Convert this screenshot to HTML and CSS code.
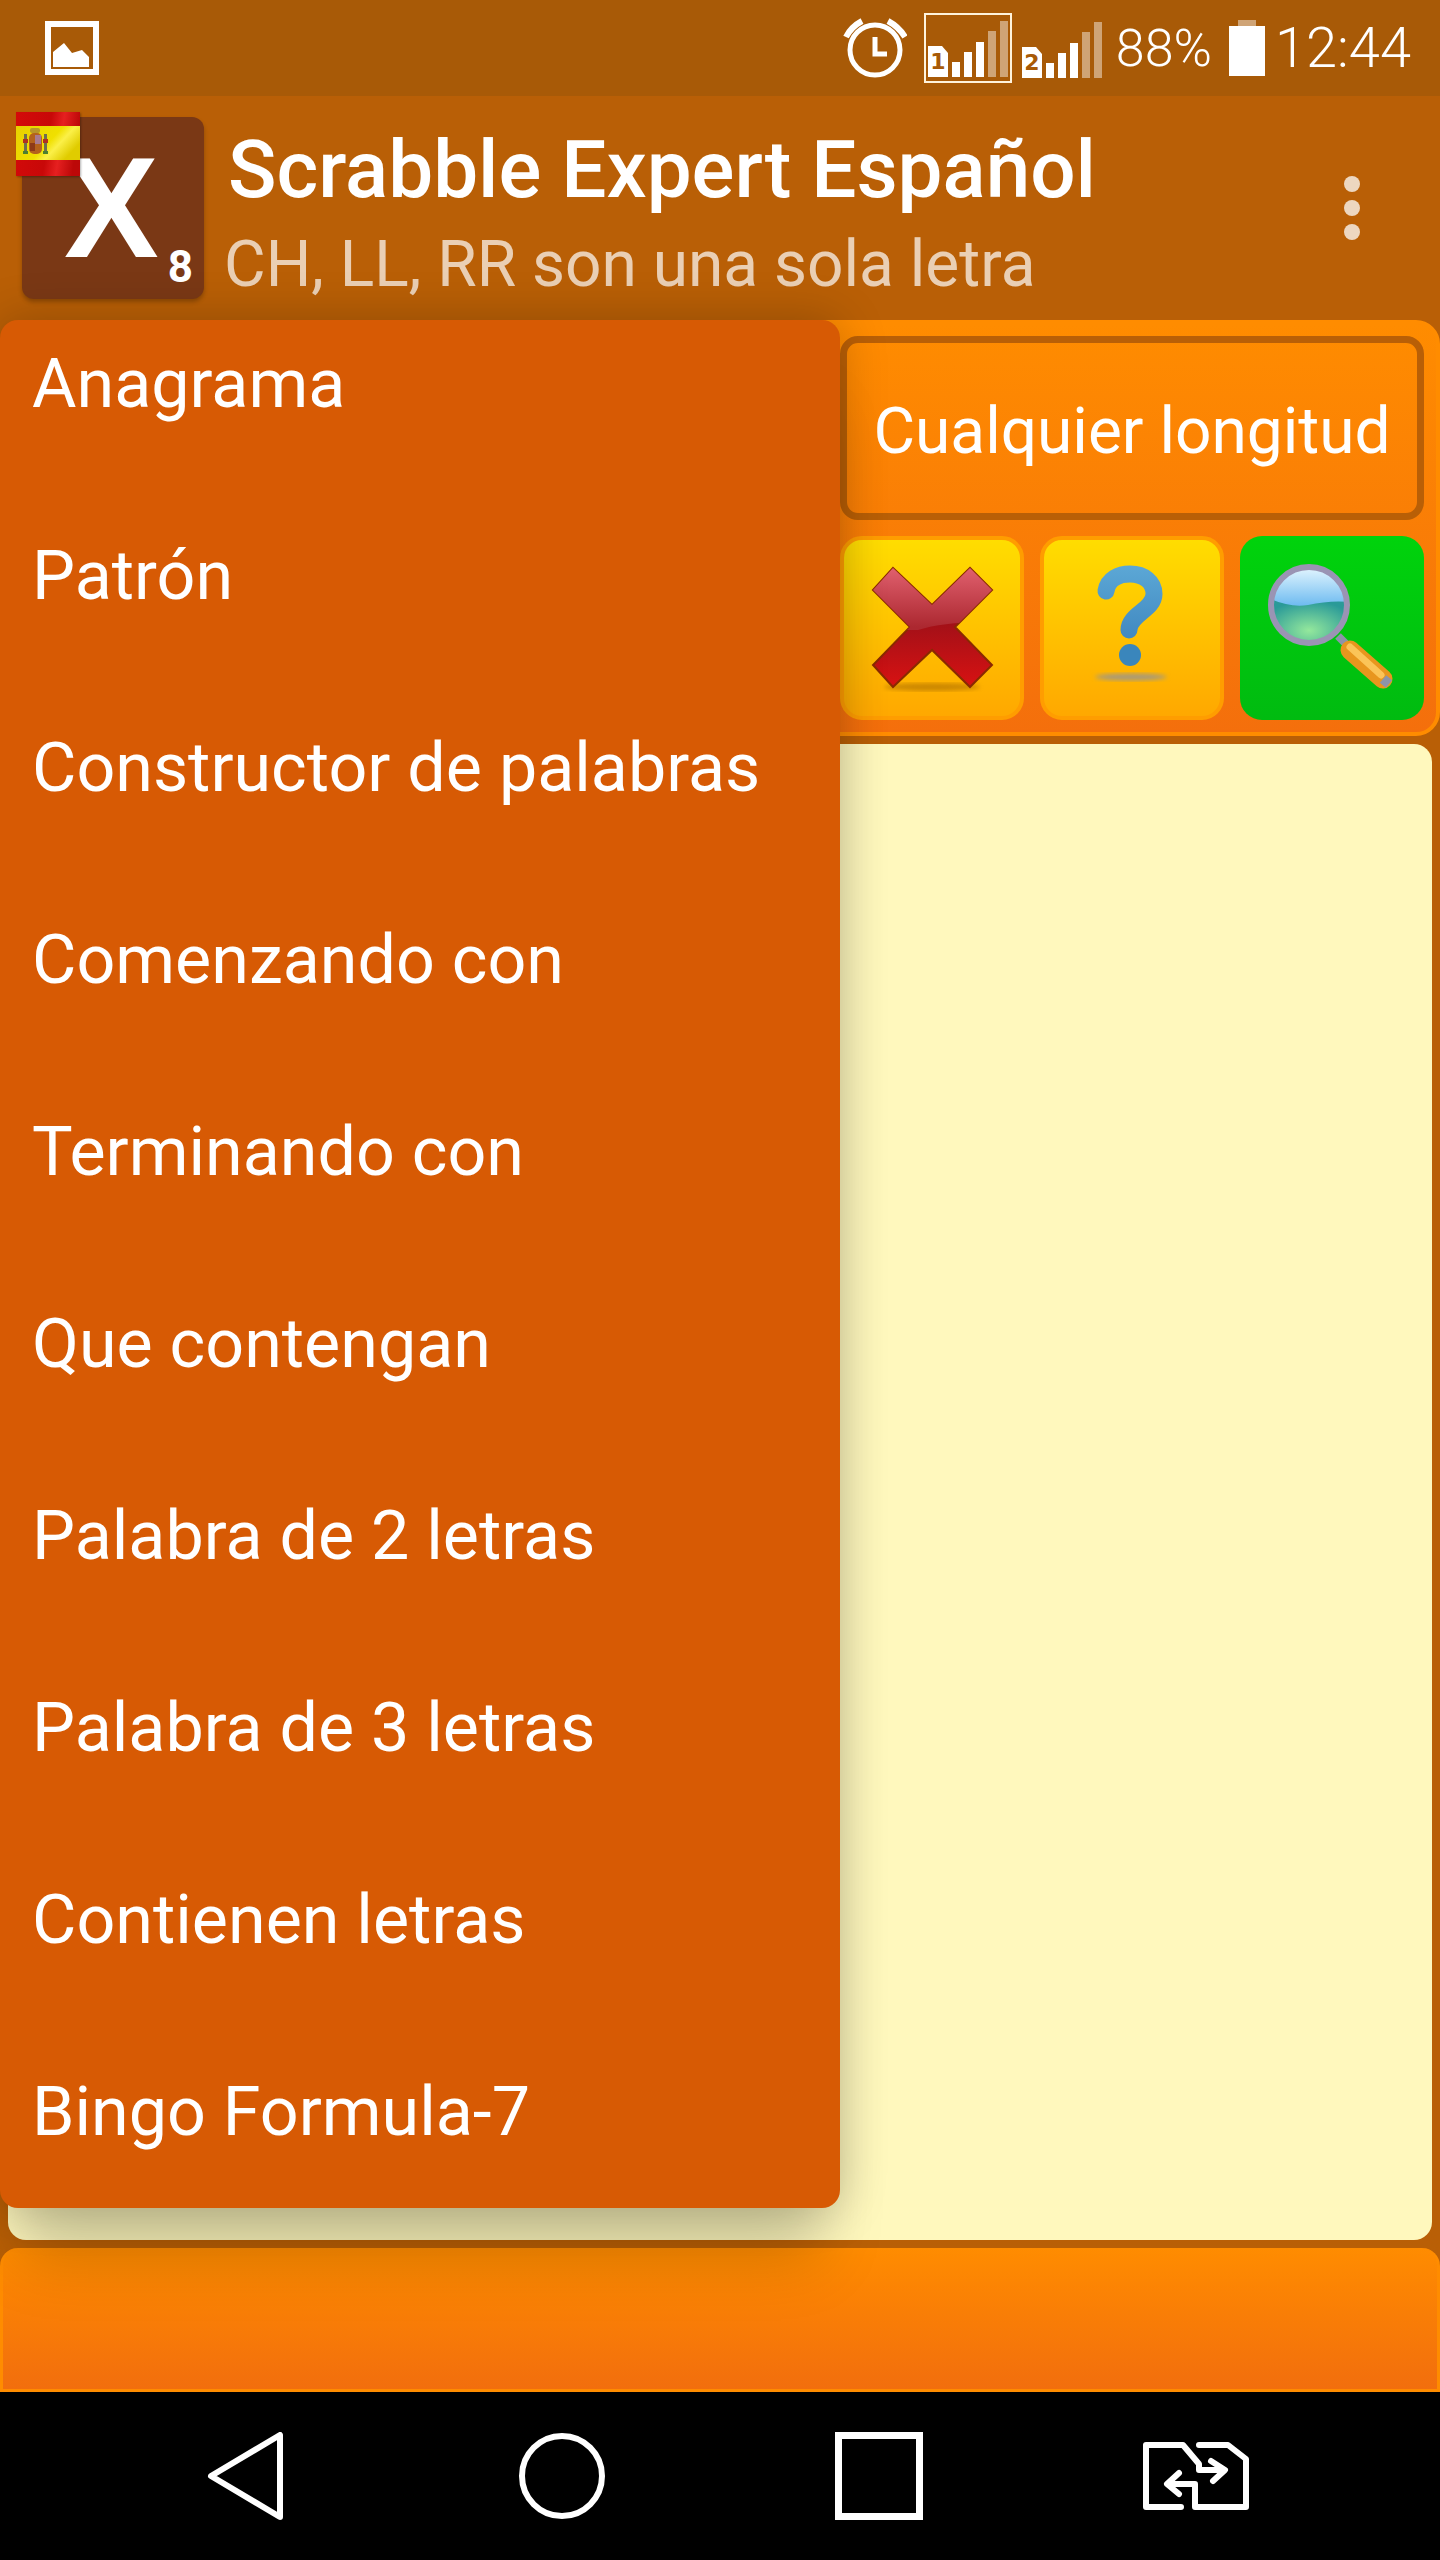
FILE: index.html
```html
<!DOCTYPE html>
<html lang="es">
<head>
    <meta charset="UTF-8">
    <meta name="viewport" content="width=device-width, initial-scale=1.0">
    <title>Scrabble Expert Español</title>
    <link rel="stylesheet" href="styles.css">
</head>
<body>
    <div class="screen">
        <!-- status bar -->
        <div class="status-bar">
            <svg class="gallery-icon" width="54" height="54" viewBox="0 0 54 54">
                <rect x="3" y="3" width="48" height="48" fill="none" stroke="#fff" stroke-width="6"/>
                <polygon points="8,46 8,31 19,22 27,32 37,29 44,36 44,46" fill="#fff"/>
            </svg>
            <div class="status-right">
                <svg class="alarm-icon" width="64" height="62" viewBox="0 0 64 62" fill="none" stroke="#fff">
                    <circle cx="32" cy="33" r="25" stroke-width="5"/>
                    <path d="M32 20V37H44" stroke-width="5"/>
                    <path d="M3 20Q8 10 19 4M45 4Q56 10 62 20" stroke-width="6"/>
                </svg>
                <div class="sim-box">
                    <svg width="80" height="56" viewBox="0 0 80 56">
                        <path d="M0 25H14L20 32V56H0Z" fill="#fff"/>
                        <text x="10" y="48" class="sim-num">1</text>
                        <rect x="24" y="41" width="8" height="15" fill="#fff"/>
                        <rect x="36" y="31" width="8" height="25" fill="#fff"/>
                        <rect x="48" y="21" width="8" height="35" fill="#fff"/>
                        <rect x="60" y="10" width="8" height="46" fill="#fff" opacity="0.45"/>
                        <rect x="72" y="0" width="8" height="56" fill="#fff" opacity="0.45"/>
                    </svg>
                </div>
                <svg class="sim-two" width="80" height="56" viewBox="0 0 80 56">
                    <path d="M0 25H14L20 32V56H0Z" fill="#fff"/>
                    <text x="10" y="48" class="sim-num">2</text>
                    <rect x="24" y="41" width="8" height="15" fill="#fff"/>
                    <rect x="36" y="31" width="8" height="25" fill="#fff"/>
                    <rect x="48" y="21" width="8" height="35" fill="#fff"/>
                    <rect x="60" y="10" width="8" height="46" fill="#fff" opacity="0.45"/>
                    <rect x="72" y="0" width="8" height="56" fill="#fff" opacity="0.45"/>
                </svg>
                <span class="battery-text">88%</span>
                <svg class="battery-icon" width="36" height="56" viewBox="0 0 36 56">
                    <rect x="9" y="0" width="18" height="6" fill="#fff" opacity="0.45"/>
                    <rect x="0" y="6" width="36" height="50" fill="#fff"/>
                </svg>
                <span class="clock">12:44</span>
            </div>
        </div>

        <!-- action bar -->
        <div class="app-bar">
            <div class="tile">
                <span class="tile-letter">X</span>
                <span class="tile-score">8</span>
            </div>
            <svg class="flag" width="64" height="64" viewBox="0 0 64 64">
                <defs>
                    <linearGradient id="flagYellow" x1="0" y1="0" x2="1" y2="0.5">
                        <stop offset="0" stop-color="#e8d000"/>
                        <stop offset="0.6" stop-color="#f0e000"/>
                        <stop offset="0.75" stop-color="#fbf048"/>
                        <stop offset="1" stop-color="#e0cc00"/>
                    </linearGradient>
                    <linearGradient id="flagRed" x1="0" y1="0" x2="1" y2="0.15">
                        <stop offset="0" stop-color="#d40a0a"/>
                        <stop offset="0.55" stop-color="#c80808"/>
                        <stop offset="0.75" stop-color="#e62020"/>
                        <stop offset="1" stop-color="#bc0808"/>
                    </linearGradient>
                </defs>
                <rect width="64" height="64" fill="url(#flagRed)"/>
                <rect y="14" width="64" height="34" fill="url(#flagYellow)"/>
                <rect x="14" y="16" width="10" height="5" rx="2" fill="#b8962a"/>
                <rect x="13" y="21" width="13" height="21" rx="5" fill="#b4621c"/>
                <rect x="19" y="23" width="6" height="9" fill="#a87a90"/>
                <rect x="14" y="31" width="5" height="8" fill="#8e3a18"/>
                <rect x="8" y="22" width="3" height="17" fill="#6e6e50"/>
                <rect x="28" y="22" width="3" height="17" fill="#6e6e50"/>
                <rect x="7" y="27" width="5" height="4" fill="#b03020"/>
                <rect x="27" y="27" width="5" height="4" fill="#b03020"/>
                <rect x="7" y="39" width="5" height="3" fill="#4e8030"/>
                <rect x="27" y="39" width="5" height="3" fill="#4e8030"/>
            </svg>
            <div class="app-titles">
                <div class="app-title">Scrabble Expert Español</div>
                <div class="app-subtitle">CH, LL, RR son una sola letra</div>
            </div>
            <div class="overflow-dots">
                <span></span>
                <span></span>
                <span></span>
            </div>
        </div>

        <!-- search panel -->
        <div class="search-panel">
            <div class="length-select">Cualquier longitud</div>
            <div class="tool-row">
                <div class="tool-btn">
                    <svg width="176" height="176" viewBox="4 10 176 176">
                        <defs>
                            <linearGradient id="xDark" gradientUnits="userSpaceOnUse" x1="0" y1="90" x2="0" y2="157">
                                <stop offset="0" stop-color="#a01018"/>
                                <stop offset="1" stop-color="#d81212"/>
                            </linearGradient>
                            <linearGradient id="xLight" gradientUnits="userSpaceOnUse" x1="0" y1="38" x2="0" y2="97">
                                <stop offset="0" stop-color="#e0606e"/>
                                <stop offset="1" stop-color="#ac2830"/>
                            </linearGradient>
                            <clipPath id="xTop">
                                <path d="M20 20H165V93Q110 90 78 100H20Z"/>
                            </clipPath>
                            <filter id="soft"><feGaussianBlur stdDeviation="2"/></filter>
                        </defs>
                        <ellipse cx="92" cy="157" rx="48" ry="4" fill="#b87800" opacity="0.7" filter="url(#soft)"/>
                        <polygon points="53,38 92,75 130,38 152,60 115,97 152,135 130,157 92,120 53,157 33,135 70,97 33,60" fill="url(#xDark)" stroke="#8a2a00" stroke-width="2"/>
                        <polygon points="53,38 92,75 130,38 152,60 115,97 152,135 130,157 92,120 53,157 33,135 70,97 33,60" fill="url(#xLight)" clip-path="url(#xTop)"/>
                    </svg>
                </div>
                <div class="tool-btn">
                    <svg width="176" height="176" viewBox="4 10 176 176">
                        <defs>
                            <linearGradient id="qBlue" gradientUnits="userSpaceOnUse" x1="0" y1="35" x2="0" y2="110">
                                <stop offset="0" stop-color="#5ca8d6"/>
                                <stop offset="1" stop-color="#4088c0"/>
                            </linearGradient>
                        </defs>
                        <ellipse cx="91" cy="147" rx="36" ry="3.500" fill="#a89a78" filter="url(#soft)"/>
                        <path d="M66 61C68 49 79 44 90 44C104 44 114 52 114 64C114 80 89 84 89 100" fill="none" stroke="url(#qBlue)" stroke-width="17" stroke-linecap="round"/>
                        <circle cx="90" cy="125" r="11" fill="#3a86bc"/>
                    </svg>
                </div>
                <div class="tool-btn tool-btn-go">
                    <svg width="184" height="184" viewBox="0 6 184 184">
                        <defs>
                            <linearGradient id="lensTop" x1="0" y1="0" x2="0" y2="1">
                                <stop offset="0" stop-color="#e4f6ff"/>
                                <stop offset="0.5" stop-color="#70bcf0"/>
                            </linearGradient>
                            <radialGradient id="lensLow" cx="0.5" cy="0.65" r="0.6">
                                <stop offset="0" stop-color="#94e89c"/>
                                <stop offset="1" stop-color="#2a9a98"/>
                            </radialGradient>
                            <clipPath id="lensClip">
                                <circle cx="69" cy="75" r="38"/>
                            </clipPath>
                        </defs>
                        <path d="M98 106L108 116" stroke="#8c94a8" stroke-width="8"/>
                        <path d="M110 120L143 149" stroke="#e8961e" stroke-width="19" stroke-linecap="round"/>
                        <path d="M110 117L141 145" stroke="#fbc458" stroke-width="7" stroke-linecap="round"/>
                        <path d="M143 149L149 154" stroke="#8c94a8" stroke-width="10"/>
                        <circle cx="69" cy="75" r="38" fill="url(#lensTop)"/>
                        <path d="M28 68Q50 78 68 75Q90 70 110 72V118H28Z" fill="url(#lensLow)" clip-path="url(#lensClip)"/>
                        <circle cx="69" cy="75" r="38" fill="none" stroke="#9a94b4" stroke-width="6"/>
                    </svg>
                </div>
            </div>
        </div>

        <div class="results"></div>
        <div class="bottom-bar"></div>

        <!-- navigation bar -->
        <div class="nav-bar">
            <svg width="76" height="88" viewBox="0 0 76 88" fill="none" stroke="#fff" stroke-width="6" stroke-linejoin="round">
                <path d="M73 3V85L4 44Z"/>
            </svg>
            <svg width="88" height="88" viewBox="0 0 88 88" fill="none" stroke="#fff" stroke-width="6">
                <circle cx="44" cy="44" r="40"/>
            </svg>
            <svg width="88" height="88" viewBox="0 0 88 88" fill="none" stroke="#fff" stroke-width="7">
                <rect x="3.500" y="3.500" width="81" height="81"/>
            </svg>
            <svg width="130" height="90" viewBox="0 0 130 90" fill="none" stroke="#fff" stroke-width="6" stroke-linejoin="round" stroke-linecap="round">
                <path d="M50 76H15V14H52L68 33V39H93M80 30L94 39L82 50"/>
                <path d="M68 14H97L115 28V76H64V53H38M48 42L36 53L48 63"/>
            </svg>
        </div>

        <!-- search mode menu, open over the page -->
        <div class="mode-menu">
            <div class="mode-item">Anagrama</div>
            <div class="mode-item">Patrón</div>
            <div class="mode-item">Constructor de palabras</div>
            <div class="mode-item">Comenzando con</div>
            <div class="mode-item">Terminando con</div>
            <div class="mode-item">Que contengan</div>
            <div class="mode-item">Palabra de 2 letras</div>
            <div class="mode-item">Palabra de 3 letras</div>
            <div class="mode-item">Contienen letras</div>
            <div class="mode-item">Bingo Formula-7</div>
        </div>
    </div>
</body>
</html>
```

FILE: styles.css
```css
body {
    margin: 0;
    font-family: Roboto, "Liberation Sans", sans-serif;
    background-color: #000;
}

.screen {
    position: relative;
    width: 1440px;
    height: 2560px;
    display: flex;
    flex-direction: column;
    overflow: hidden;
    background-color: #b95f06;
    color: #fff;
}

.status-bar {
    height: 96px;
    flex: none;
    display: flex;
    align-items: center;
    padding: 0 29px 0 45px;
    background-color: #a85a07;
}

.status-right {
    margin-left: auto;
    display: flex;
    align-items: center;
}

.alarm-icon {
    margin-right: 17px;
}

.sim-box {
    width: 84px;
    height: 62px;
    border: 2px solid #fff3dc;
    display: flex;
    align-items: flex-end;
    justify-content: center;
    padding-bottom: 4px;
}

.sim-num {
    font-family: "DejaVu Sans", sans-serif;
    font-size: 22px;
    font-weight: bold;
    text-anchor: middle;
    fill: #a85a07;
}

.sim-two {
    margin-left: 10px;
    align-self: flex-end;
    margin-bottom: 5px;
}

.battery-text {
    margin-left: 14px;
    font-size: 52px;
    font-weight: 300;
}

.battery-icon {
    margin-left: 17px;
}

.clock {
    margin-left: 10px;
    font-size: 56px;
    font-weight: 300;
}

.app-bar {
    height: 224px;
    flex: none;
    box-sizing: border-box;
    display: flex;
    align-items: flex-start;
    padding-left: 22px;
}

.tile {
    position: relative;
    width: 182px;
    height: 182px;
    margin-top: 21px;
    border-radius: 12px;
    background-color: #7a3815;
    box-shadow: 0 3px 4px rgba(0, 0, 0, 0.25);
}

.tile-letter {
    position: absolute;
    left: 42px;
    top: 9px;
    font-family: "Liberation Sans", sans-serif;
    font-size: 142px;
    line-height: 163px;
    font-weight: 700;
}

.tile-score {
    position: absolute;
    right: 11px;
    bottom: 6px;
    font-size: 44px;
    line-height: 52px;
    font-weight: 700;
}

.flag {
    position: absolute;
    left: 16px;
    top: 112px;
    box-shadow: 1px 1px 2px rgba(0, 0, 0, 0.3);
}

.app-titles {
    padding: 29px 0 0 24px;
}

.app-title {
    font-size: 80px;
    line-height: 90px;
    font-weight: 500;
}

.app-subtitle {
    margin-top: 14px;
    margin-left: -4px;
    font-size: 64px;
    line-height: 72px;
    color: rgba(255, 255, 255, 0.7);
}

.overflow-dots {
    margin-left: auto;
    margin-right: 80px;
    padding-top: 80px;
    display: flex;
    flex-direction: column;
    gap: 8px;
}

.overflow-dots span {
    width: 16px;
    height: 16px;
    border-radius: 50%;
    background-color: rgba(255, 255, 255, 0.75);
}

.search-panel {
    flex: none;
    height: 416px;
    box-sizing: border-box;
    padding: 12px 12px 12px 836px;
    display: flex;
    flex-direction: column;
    gap: 16px;
    border: 4px solid #ff8c00;
    border-radius: 24px;
    background: linear-gradient(#ff8c00, #f46f0c);
}

.length-select {
    height: 184px;
    box-sizing: border-box;
    padding-top: 6px;
    display: flex;
    align-items: center;
    justify-content: center;
    border: 7px solid #b95f06;
    border-radius: 18px;
    font-size: 64px;
}

.tool-row {
    display: flex;
    gap: 16px;
}

.tool-btn {
    width: 184px;
    height: 184px;
    box-sizing: border-box;
    border: 4px solid #ff9d00;
    border-radius: 22px;
    background: linear-gradient(#ffdd00, #ffa800);
}

.tool-btn svg {
    display: block;
}

.tool-btn-go {
    border: none;
    background: linear-gradient(#00d30c, #00bb10);
}

.results {
    flex: 1;
    margin: 8px;
    border-radius: 18px;
    background-color: #fff8bd;
}

.bottom-bar {
    flex: none;
    height: 144px;
    box-sizing: border-box;
    border: 3px solid #ff8c00;
    border-top: none;
    border-radius: 18px 18px 0 0;
    background: linear-gradient(#ff8c00, #f26e0d);
}

.nav-bar {
    flex: none;
    height: 168px;
    box-sizing: border-box;
    padding: 0 86px;
    display: grid;
    grid-template-columns: repeat(4, 1fr);
    justify-items: center;
    align-items: center;
    background-color: #000;
}

.mode-menu {
    position: absolute;
    left: 0;
    top: 320px;
    width: 840px;
    height: 1888px;
    display: flex;
    flex-direction: column;
    justify-content: flex-end;
    overflow: hidden;
    border-radius: 18px;
    background-color: #d75a04;
    box-shadow: 0 0 48px rgba(0, 0, 0, 0.22), 0 70px 60px -20px rgba(0, 0, 0, 0.18);
}

.mode-item {
    flex: none;
    height: 192px;
    display: flex;
    align-items: center;
    padding-left: 32px;
    font-size: 68.2px;
}
```
